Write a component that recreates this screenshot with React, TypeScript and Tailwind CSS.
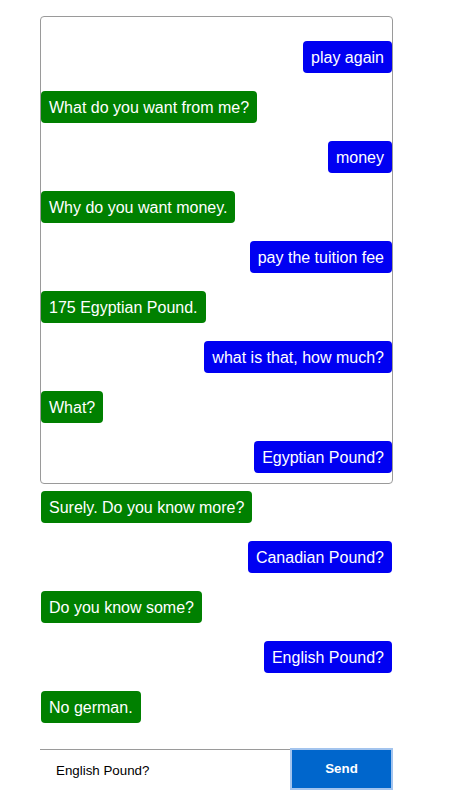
import React from "react";

const messages: { text: string; me: boolean }[] = [
  { text: "play again", me: true },
  { text: "What do you want from me?", me: false },
  { text: "money", me: true },
  { text: "Why do you want money.", me: false },
  { text: "pay the tuition fee", me: true },
  { text: "175 Egyptian Pound.", me: false },
  { text: "what is that, how much?", me: true },
  { text: "What?", me: false },
  { text: "Egyptian Pound?", me: true },
  { text: "Surely. Do you know more?", me: false },
  { text: "Canadian Pound?", me: true },
  { text: "Do you know some?", me: false },
  { text: "English Pound?", me: true },
  { text: "No german.", me: false },
];

export default function App() {
  return (
    <div
      className="w-[452px] min-h-[800px] bg-white pt-4 pl-10"
      style={{ fontFamily: '"Liberation Sans", Arial, sans-serif' }}
    >
      <div className="w-[353px]">
        <div className="h-[468px] border border-[#9a9a9a] rounded-[4px]">
          <div className="flex flex-col gap-[18px] pt-6">
            {messages.map((m, i) => (
              <div key={i} className={`flex ${m.me ? "justify-end" : "justify-start"}`}>
                <div
                  className={`px-2 pt-[8px] pb-[6px] text-[16px] leading-[18px] text-white rounded-[4px] ${
                    m.me ? "bg-[#0000f2]" : "bg-[#008000]"
                  }`}
                >
                  {m.text}
                </div>
              </div>
            ))}
          </div>
        </div>
        <div className="mt-[264px] flex items-end">
          <input
            readOnly
            value="English Pound?"
            className="flex-1 min-w-0 h-[41px] border-t border-[#9a9a9a] pl-4 text-[13.33px] text-black outline-none bg-white"
            style={{ fontFamily: '"Liberation Sans", Arial, sans-serif' }}
          />
          <button
            className="w-[103px] h-[42px] bg-[#0066cc] border-2 border-[#a3c4ee] text-white font-bold text-[13.33px]"
            style={{ fontFamily: '"Liberation Sans", Arial, sans-serif' }}
          >
            Send
          </button>
        </div>
      </div>
    </div>
  );
}
